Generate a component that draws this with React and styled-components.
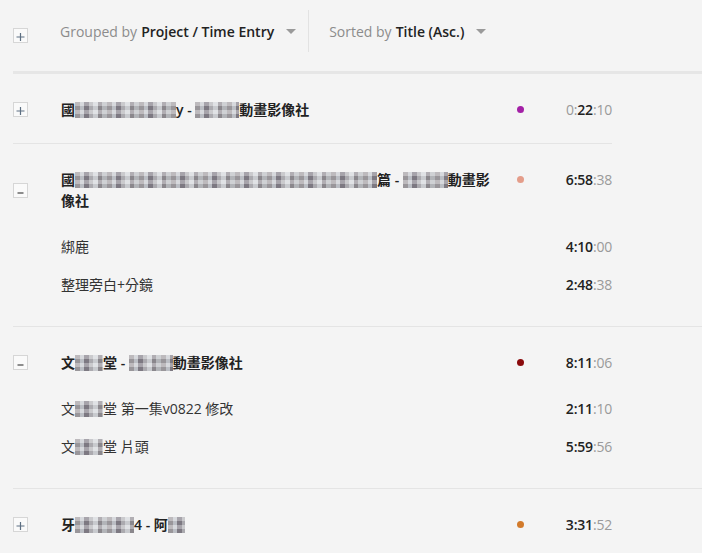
import React from 'react'
import styled, { createGlobalStyle } from 'styled-components'

const GlobalStyle = createGlobalStyle`
  html, body {
    margin: 0;
    background: #f4f4f4;
  }
  body {
    font-family: "Open Sans", "Noto Sans CJK TC", sans-serif;
    color: #222;
  }
`

const Page = styled.div`
  padding-left: 13px;
  width: 689px;
  height: 553px;
  overflow: hidden;
`

const Header = styled.header`
  display: flex;
  align-items: center;
  padding: 10px 0 19px;
  border-bottom: 3px solid #e6e6e6;
`

const Toggle = styled.span`
  box-sizing: border-box;
  width: 15px;
  height: 15px;
  border: 1px solid #d6d6d6;
  background: #fafafa;
  display: flex;
  align-self: center;
  svg {
    display: block;
  }
`

const HeaderToggle = styled(Toggle)`
  margin-top: 8px;
`

const Dropdown = styled.div`
  display: flex;
  align-items: center;
  height: 42px;
  padding: 0 12px 0 ${props => props.$first ? '32px' : '20px'};
  border-right: ${props => props.$first ? '1px solid #e2e2e2' : 'none'};
  font-size: 14px;
  color: #8c8c8c;
  white-space: nowrap;
  b {
    font-weight: 600;
    color: #222;
    margin-left: 4px;
  }
`

const Caret = styled.span`
  width: 0;
  height: 0;
  margin-left: 12px;
  margin-top: 1px;
  border-left: 5px solid transparent;
  border-right: 5px solid transparent;
  border-top: 5px solid #9a9a9a;
`

const Group = styled.section`
  padding: 25px 0 23px;
  border-bottom: 1px solid #e4e4e4;
  width: ${props => props.$narrow ? '599px' : 'auto'};
`

const Row = styled.div`
  display: grid;
  grid-template-columns: 48px 429px 60px 62px;
  align-items: start;
  font-size: 14px;
  line-height: 21px;
`

const Title = styled.div`
  grid-column: 2;
  font-weight: ${props => props.$sub ? 400 : 600};
  color: ${props => props.$sub ? '#333' : '#222'};
`

const DotCell = styled.div`
  grid-column: 3;
  height: 21px;
  display: flex;
  align-items: center;
  justify-content: center;
`

const Dot = styled.span`
  width: 7px;
  height: 7px;
  border-radius: 50%;
  background: ${props => props.$color};
`

const Time = styled.div`
  grid-column: 4;
  text-align: right;
  font-size: 14px;
  letter-spacing: -0.2px;
  .hm {
    font-weight: 600;
    color: #222;
  }
  .dim {
    color: #9a9a9a;
  }
`

const SubList = styled.div`
  display: flex;
  flex-direction: column;
  gap: 17px;
  padding: 25px 0 8px;
`

const Mosaic = styled.span`
  display: inline-block;
  width: ${props => props.$w}px;
  height: 16px;
  vertical-align: -3px;
  background-image:
    linear-gradient(180deg, rgba(255,255,255,0.28) 0 50%, rgba(0,0,0,0.06) 50% 100%),
    repeating-linear-gradient(90deg,
      #a39fa4 0 5px, #c7cad0 5px 9px, #85818a 9px 14px,
      #b6b5ba 14px 18px, #d4d7db 18px 23px, #938f95 23px 27px,
      #bdbfc4 27px 32px);
  background-size: 100% 8px, 100% 100%;
`

const PlusIcon = () => (
  <svg width="13" height="13" viewBox="0 0 13 13">
    <path d="M2.5 8H10.5M6.5 4V12" stroke="#5d6f82" strokeWidth="1.2" fill="none" />
  </svg>
)

const MinusIcon = () => (
  <svg width="13" height="13" viewBox="0 0 13 13">
    <path d="M3.5 9H9.5" stroke="#444" strokeWidth="1.2" fill="none" />
  </svg>
)

const Duration = ({ h, m, s }) => (
  <Time>
    {h === 0
      ? <><span className="dim">0:</span><span className="hm">{m}</span></>
      : <span className="hm">{h}:{m}</span>}
    <span className="dim">:{s}</span>
  </Time>
)

const groups = [
  {
    open: false,
    narrow: true,
    color: '#a320a6',
    title: <>國<Mosaic $w={101} />y - <Mosaic $w={44} />動畫影像社</>,
    time: { h: 0, m: '22', s: '10' },
    items: []
  },
  {
    open: true,
    color: '#e49d8a',
    title: <>國<Mosaic $w={302} />篇 - <Mosaic $w={45} />動畫影像社</>,
    time: { h: 6, m: '58', s: '38' },
    items: [
      { title: <>綁鹿</>, time: { h: 4, m: '10', s: '00' } },
      { title: <>整理旁白+分鏡</>, time: { h: 2, m: '48', s: '38' } }
    ]
  },
  {
    open: true,
    color: '#8a0a0c',
    title: <>文<Mosaic $w={28} />堂 - <Mosaic $w={44} />動畫影像社</>,
    time: { h: 8, m: '11', s: '06' },
    items: [
      { title: <>文<Mosaic $w={28} />堂 第一集v0822 修改</>, time: { h: 2, m: '11', s: '10' } },
      { title: <>文<Mosaic $w={28} />堂 片頭</>, time: { h: 5, m: '59', s: '56' } }
    ]
  },
  {
    open: false,
    color: '#d27a2b',
    title: <>牙<Mosaic $w={59} />4 - 阿<Mosaic $w={17} /></>,
    time: { h: 3, m: '31', s: '52' },
    items: []
  }
]

export default function App() {
  return (
    <Page>
      <GlobalStyle />
      <Header>
        <HeaderToggle><PlusIcon /></HeaderToggle>
        <Dropdown $first>
          Grouped by<b>Project / Time Entry</b>
          <Caret />
        </Dropdown>
        <Dropdown>
          Sorted by<b>Title (Asc.)</b>
          <Caret />
        </Dropdown>
      </Header>

      {groups.map((g, i) => (
        <Group key={i} $narrow={g.narrow}>
          <Row>
            <Toggle>{g.open ? <MinusIcon /> : <PlusIcon />}</Toggle>
            <Title>{g.title}</Title>
            <DotCell><Dot $color={g.color} /></DotCell>
            <Duration {...g.time} />
          </Row>
          {g.open && (
            <SubList>
              {g.items.map((it, j) => (
                <Row key={j}>
                  <Title $sub>{it.title}</Title>
                  <Duration {...it.time} />
                </Row>
              ))}
            </SubList>
          )}
        </Group>
      ))}
    </Page>
  )
}
